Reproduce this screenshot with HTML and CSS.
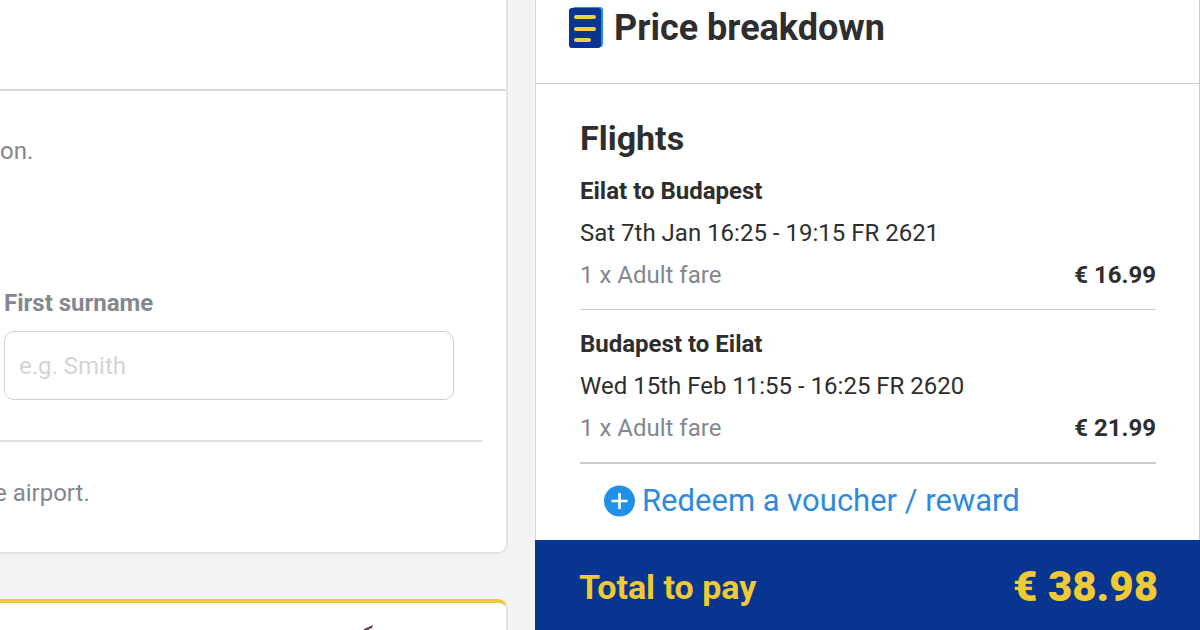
FILE: index.html
```html
<!DOCTYPE html>
<html lang="en">
<head>
    <meta charset="UTF-8">
    <meta name="viewport" content="width=device-width, initial-scale=1.0">
    <title>Passengers</title>
    <link rel="stylesheet" href="styles.css">
</head>
<body>
    <div class="page">
        <main class="main">
            <section class="card passenger">
                <div class="card-header"></div>
                <p class="hint">on.</p>
                <form class="passenger-form">
                    <label for="surname">First surname</label>
                    <input id="surname" type="text" placeholder="e.g. Smith">
                </form>
                <p class="notice">e airport.</p>
            </section>

            <section class="card extras">
                <svg class="extras-art" width="16" height="8" viewBox="0 0 16 8" aria-hidden="true">
                    <path d="M3 7 L7 4 L10 3 L14 1 L13 4 L10 5 L8 8 Z" fill="#4b2f42"/>
                    <path d="M7 5 L11 4 L9 6 Z" fill="#c2516c"/>
                </svg>
            </section>
        </main>

        <aside class="breakdown">
            <header class="breakdown-header">
                <svg width="36" height="42" viewBox="0 0 36 42" aria-hidden="true">
                    <rect x="4" y="0" width="31" height="40" rx="3" fill="#2091eb"/>
                    <rect x="1" y="1" width="32" height="40" rx="3" fill="#073590"/>
                    <path d="M8 10h18M8 22h18M8 33h13" stroke="#f0cd4a" stroke-width="4" stroke-linecap="round"/>
                </svg>
                <h1>Price breakdown</h1>
            </header>

            <div class="breakdown-body">
                <h2>Flights</h2>

                <div class="flight">
                    <h3>Eilat to Budapest</h3>
                    <p>Sat 7th Jan 16:25 - 19:15 FR 2621</p>
                    <div class="fare">
                        <span>1 x Adult fare</span>
                        <strong>€ 16.99</strong>
                    </div>
                </div>

                <div class="flight">
                    <h3>Budapest to Eilat</h3>
                    <p>Wed 15th Feb 11:55 - 16:25 FR 2620</p>
                    <div class="fare">
                        <span>1 x Adult fare</span>
                        <strong>€ 21.99</strong>
                    </div>
                </div>

                <a class="voucher" href="#">
                    <svg width="32" height="32" viewBox="0 0 32 32" aria-hidden="true">
                        <circle cx="15.5" cy="16" r="15.5" fill="#2091eb"/>
                        <path d="M15.5 8v16M7.5 16h16" stroke="#fff" stroke-width="2.6"/>
                    </svg>
                    Redeem a voucher / reward
                </a>
            </div>

            <footer class="total">
                <span>Total to pay</span>
                <strong>€ 38.98</strong>
            </footer>
        </aside>
    </div>
</body>
</html>
```
FILE: styles.css
```css
* {
    box-sizing: border-box;
}

body {
    font-family: Roboto, 'Liberation Sans', sans-serif;
    font-size: 24px;
    line-height: 42px;
    background-color: #f3f3f3;
    margin: 0;
    color: #2e2e2e;
}

h1, h2, h3, p {
    margin: 0;
}

.page {
    display: grid;
    grid-template-columns: minmax(0, 508fr) minmax(0, 665fr);
    column-gap: 27px;
    min-height: 100vh;
}

.main {
    display: flex;
    flex-direction: column;
    gap: 45px;
}

.card {
    background-color: #fff;
    border-right: 2px solid #e2e3e5;
    border-bottom: 2px solid #e2e3e5;
    border-bottom-right-radius: 10px;
    color: #84878f;
    overflow: hidden;
}

.card-header {
    height: 91px;
    border-bottom: 2px solid #d8dadc;
}

.hint {
    padding-top: 39px;
}

.passenger-form {
    margin-right: 24px;
    padding: 110px 28px 40px 4px;
    border-bottom: 2px solid #dedfe1;
}

.passenger-form label {
    display: block;
    font-weight: 700;
}

.passenger-form input {
    display: block;
    width: 100%;
    height: 69px;
    margin-top: 7px;
    padding: 0 14px;
    border: 1px solid #cfd1d4;
    border-radius: 10px;
    background-color: #fff;
    font: inherit;
    color: #2e2e2e;
}

.passenger-form input::placeholder {
    color: #d2d4d7;
}

.notice {
    padding: 30px 0 38px;
    text-indent: -6px;
}

.extras {
    display: flex;
    flex: 1;
    align-items: flex-end;
    justify-content: center;
    border-top: 4px solid #ebc83c;
    border-bottom: none;
    border-radius: 0 10px 0 0;
}

.extras-art {
    display: block;
    margin-left: 228px;
    margin-bottom: -2px;
}

.breakdown {
    display: flex;
    flex-direction: column;
    background-color: #fff;
    border-left: 1px solid #d4d6d9;
    border-right: 1px solid #c8cacd;
}

.breakdown-header {
    display: flex;
    align-items: center;
    gap: 10px;
    padding: 0 32px 27px;
    border-bottom: 1px solid #c8cacd;
}

h1 {
    font-size: 36px;
    line-height: 56px;
}

.breakdown-body {
    padding: 34px 43px 16px 44px;
}

h2 {
    margin-bottom: 12px;
    font-size: 34px;
    line-height: 40px;
}

h3 {
    font-size: 24px;
}

.flight {
    margin-bottom: 13px;
    padding-bottom: 13px;
    border-bottom: 1px solid #c8cacd;
}

.flight:last-of-type {
    border-bottom-width: 2px;
}

.fare {
    display: flex;
    justify-content: space-between;
    color: #84878f;
}

.fare strong {
    color: #2e2e2e;
}

.voucher {
    display: flex;
    align-items: center;
    gap: 6px;
    padding-left: 24px;
    font-size: 31px;
    line-height: 47px;
    color: #2f8ade;
    text-decoration: none;
}

.total {
    display: flex;
    flex: 1;
    align-items: center;
    justify-content: space-between;
    margin: 0 -1px;
    padding: 4px 42px 0 44px;
    background-color: #073590;
    color: #f1c933;
    font-size: 34px;
    font-weight: 700;
}

.total strong {
    font-size: 42px;
}
```
